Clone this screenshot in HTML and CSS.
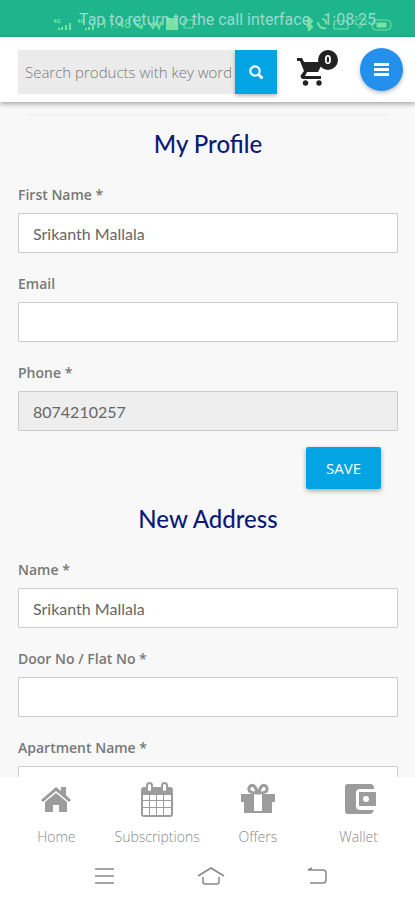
FILE: index.html
```html
<!DOCTYPE html>
<html lang="en">
<head>
<meta charset="utf-8">
<meta name="viewport" content="width=device-width, initial-scale=1">
<title>My Profile</title>
<link rel="stylesheet" href="styles.css">
</head>
<body>
<div class="status">
  <div class="status-icons">
    <svg width="48" height="14" viewBox="0 0 48 14" fill="currentColor"><path d="M5 11h2v2H5zM8 10h2v3H8zM12 8h2v5h-2zM16 6h2v7h-2zM32 11h2v2h-2zM35 10h2v3h-2zM39 8h2v5h-2z"/><text x="0" y="6" class="tiny">4G</text><text x="24" y="6" class="tiny">4G</text></svg>
    <span class="clock">11:48</span>
    <svg width="66" height="14" viewBox="0 0 66 14" fill="none" stroke="currentColor" stroke-width="2"><path d="M3 2c0 5 4 9 9 9M2 2l3 2M9 10l3-2M18 5l4 6 3-5 3 5 2-6"/><path d="M36 2h10v10H36z" fill="currentColor"/><path d="M53 3h9v8h-9z" stroke-width="1"/></svg>
    <svg class="status-right" width="88" height="14" viewBox="0 0 88 14" fill="none" stroke="currentColor" stroke-width="1"><path d="M3 4l5 6-3 3V1l3 3-5 6M14 5c0 4 3 7 8 6M18 2a4 4 0 0 1 4 5" stroke-width="2"/><path d="M30 4h14v8H30zM50 4l6 7 7-7c-4-3-9-3-13 0z"/><rect x="68" y="3" width="19" height="10" rx="4"/><path d="M73 6h9v4h-9z" fill="currentColor"/></svg>
  </div>
  <div class="call"><span>Tap to return to the call interface</span><span>1:08:25</span></div>
</div>
<header class="header">
  <form class="search">
    <input type="text" aria-label="Search products" placeholder="Search products with key words">
    <button type="button" aria-label="Search"><svg width="16" height="16" viewBox="0 0 16 16" fill="none" stroke="#fff"><circle cx="7" cy="7" r="4.7" stroke-width="2.2"/><path d="M10.5 10.5l4 4" stroke-width="2.8"/></svg></button>
  </form>
  <a class="cart" href="#" aria-label="Cart">
    <svg width="28" height="29" viewBox="0 0 28 29" fill="#222"><path d="M0 0h5l2 4h19l-5 10H10l-2 4h16v3H7c-3 0-4-2-3-4l3-4L3 3H0z"/><circle cx="8.500" cy="25" r="2.700"/><circle cx="22" cy="25" r="2.700"/></svg>
    <span class="badge">0</span>
  </a>
  <button class="menu" type="button" aria-label="Menu"><svg width="15" height="13" viewBox="0 0 15 13" fill="#fff"><path d="M0 0h15v3H0zM0 5h15v3H0zM0 10h15v3H0z"/></svg></button>
</header>
<main class="main">
  <hr class="rule">
  <form>
    <h1 class="title">My Profile</h1>
    <div class="field"><label for="first">First Name *</label><input id="first" type="text" value="Srikanth Mallala"></div>
    <div class="field"><label for="email">Email</label><input id="email" type="email"></div>
    <div class="field"><label for="phone">Phone *</label><input id="phone" type="tel" value="8074210257" readonly></div>
    <div class="actions"><button class="save" type="button">SAVE</button></div>
  </form>
  <form>
    <h2 class="title">New Address</h2>
    <div class="field"><label for="name">Name *</label><input id="name" type="text" value="Srikanth Mallala"></div>
    <div class="field"><label for="door">Door No / Flat No *</label><input id="door" type="text"></div>
    <div class="field"><label for="apt">Apartment Name *</label><input id="apt" type="text"></div>
  </form>
</main>
<nav class="tabs">
  <a href="#"><svg width="36" height="36" viewBox="0 0 36 36" fill="#9c9c9c"><path d="M18 5l5 4V5h5v8l5 5-2 2L18 9 5 20l-2-2z"/><path d="M18 11l11 9v10h-8v-7h-6v7H7V20z"/></svg>Home</a>
  <a href="#"><svg width="36" height="36" viewBox="0 0 36 36"><rect x="2" y="5" width="32" height="30" rx="3" fill="#9c9c9c"/><path fill="#fff" d="M4 13h6v5H4zM11 13h6v5h-6zM18 13h6v5h-6zM25 13h7v5h-7zM4 19h6v6H4zM11 19h6v6h-6zM18 19h6v6h-6zM25 19h7v6h-7zM4 26h6v7H4zM11 26h6v7h-6zM18 26h6v7h-6zM25 26h7v7h-7z"/><g fill="#fff" stroke="#9c9c9c" stroke-width="2"><rect x="8" y="1" width="5" height="9" rx="2.500"/><rect x="23" y="1" width="5" height="9" rx="2.500"/></g></svg>Subscriptions</a>
  <a href="#"><svg width="36" height="36" viewBox="0 0 36 36"><path fill="#9c9c9c" d="M1 12h34v8h-3v11H4V20H1z"/><path fill="#fff" d="M14 12h8v17h-8z"/><path fill="none" stroke="#9c9c9c" stroke-width="3" d="M17 11c-5 0-9-1-8-5 2-5 7-3 8 5zM19 11c5 0 9-1 8-5-2-5-7-3-8 5z"/></svg>Offers</a>
  <a href="#"><svg width="36" height="36" viewBox="0 0 36 36"><path fill="#9c9c9c" d="M7 2h23q2 0 3 3v2H19q-4 0-4 4v13q0 4 4 4h14l-1 2q-1 2-3 2H7q-3 0-3-3V5q0-3 3-3z"/><path fill="#9c9c9c" d="M18 10h17v14H18z"/><circle cx="25" cy="17" r="3" fill="#fff"/></svg>Wallet</a>
</nav>
<div class="system">
  <button type="button" aria-label="Recent apps"><svg width="24" height="20" viewBox="0 0 24 20"><path d="M3 3h19M3 10h19M3 17h19"/></svg></button>
  <button type="button" aria-label="Home screen"><svg width="28" height="20" viewBox="0 0 28 20"><path d="M1 10L14 2l13 8M6 11v5q0 2 2 2h12q2 0 2-2v-5"/></svg></button>
  <button type="button" aria-label="Back"><svg width="24" height="20" viewBox="0 0 24 20"><path d="M7 2L3 4h15q3 0 3 3v7q0 3-3 3H5"/></svg></button>
</div>
</body>
</html>
```
FILE: styles.css
```css
* { box-sizing: border-box; }
body {
  margin: 0;
  height: 100vh;
  display: flex;
  flex-direction: column;
  background: #fff;
  color: #777;
  font-family: "Open Sans", "Noto Sans", sans-serif;
}
button { border: 0; padding: 0; cursor: pointer; }
svg { display: block; flex: none; }
a { text-decoration: none; }

.status {
  position: relative;
  flex: none;
  height: 37px;
  background: #1eb48c;
  font-family: Roboto, sans-serif;
}
.status-icons {
  display: flex;
  align-items: center;
  height: 100%;
  padding: 10px 23px 0 53px;
  color: #78e3a0;
}
.tiny { font-size: 6px; font-weight: 700; }
.clock { width: 30px; font-size: 12px; }
.status-right { margin-left: auto; }
.call {
  position: absolute;
  inset: 2px 39px 0 79px;
  display: flex;
  align-items: center;
  justify-content: space-between;
  color: #9adad0;
  font-size: 16px;
  white-space: nowrap;
}

.header {
  position: relative;
  flex: none;
  display: flex;
  align-items: center;
  height: 65px;
  padding: 4px 12px 0 18px;
  box-shadow: 0 2px 5px #0005;
}
.search { flex: 1; display: flex; min-width: 0; height: 44px; }
.search input {
  flex: 1;
  min-width: 0;
  border: 0;
  padding: 0 4px 0 7px;
  background: #ebebeb;
  font: 300 15px "Open Sans", sans-serif;
}
.search input::placeholder { color: #777; opacity: 1; }
.search button {
  display: grid;
  place-items: center;
  width: 42px;
  background: #03a4e4;
  box-shadow: 0 2px 4px #0004;
}
.cart { position: relative; margin: 2px 22px 0 20px; width: 41px; }
.badge {
  position: absolute;
  top: -8px;
  right: 0;
  width: 20px;
  height: 20px;
  border-radius: 50%;
  background: #222;
  color: #fff;
  font: 700 12px/20px "Open Sans", sans-serif;
  text-align: center;
}
.menu {
  display: grid;
  place-items: center;
  width: 43px;
  height: 43px;
  margin-bottom: 4px;
  border-radius: 50%;
  background: #2490ee;
  box-shadow: 0 2px 4px #0004;
}

.main {
  flex: 1;
  min-height: 0;
  overflow-y: auto;
  scrollbar-width: none;
  padding: 12px 17px 0 18px;
  background: #f8f8f8;
}
.rule { margin: 0 8px 14px; border: 0; border-top: 1px solid #eee; }
.title {
  margin: 0 0 26px;
  color: #0b1a78;
  font: 500 24px/30px Lato, sans-serif;
  text-align: center;
}
.field { display: flex; flex-direction: column; gap: 8px; margin-bottom: 21px; }
.field label { font-size: 14px; line-height: 20px; font-weight: 600; }
.field input {
  width: 100%;
  height: 40px;
  padding: 0 14px;
  border: 1px solid #ccc;
  border-radius: 1px;
  background: #fff;
  color: #666;
  font: 400 16px Lato, sans-serif;
}
.field input:read-only { background: #eee; }
.actions { display: flex; justify-content: flex-end; margin: -5px 17px 15px; }
.save {
  width: 75px;
  height: 42px;
  border-radius: 2px;
  background: #03a4e4;
  box-shadow: 0 2px 5px #0005;
  color: #fff;
  font: 400 15px "Open Sans", sans-serif;
}

.tabs {
  flex: none;
  display: grid;
  grid-template-columns: repeat(4, 1fr);
  height: 75px;
  padding: 5px 6px 0;
  background: #fff;
}
.tabs a {
  display: flex;
  flex-direction: column;
  align-items: center;
  gap: 9px;
  color: #888;
  font-size: 14px;
  font-weight: 300;
  line-height: 20px;
}
.system {
  flex: none;
  display: flex;
  justify-content: space-between;
  align-items: center;
  height: 48px;
  padding: 0 86px 0 92px;
}
.system button { background: none; }
.system svg { fill: none; stroke: #888; stroke-width: 1.5; }
```
